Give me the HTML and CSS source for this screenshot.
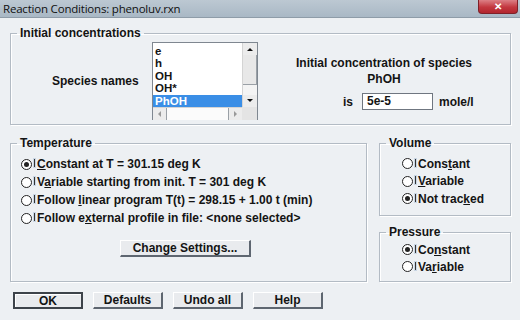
FILE: index.html
```html
<!DOCTYPE html>
<html>
<head>
<meta charset="utf-8">
<link rel="stylesheet" href="styles.css">
</head>
<body>
<div class="window">
  <div class="titlebar">
    <span class="title">Reaction Conditions: phenoluv.rxn</span>
    <span class="close">✕</span>
  </div>
  <div class="dialog">
    <fieldset class="group init">
      <legend>Initial concentrations</legend>
      <div class="init-body">
        <div class="species-label">Species names</div>
        <div class="listbox">
          <div class="items">
            <div class="item">e</div>
            <div class="item">h</div>
            <div class="item">OH</div>
            <div class="item">OH*</div>
            <div class="item sel">PhOH</div>
          </div>
          <div class="vscroll">
            <div class="sbtn up"><span class="tri-up"></span></div>
            <div class="vthumb"></div>
            <div class="sbtn down"><span class="tri-down"></span></div>
          </div>
          <div class="hscroll">
            <div class="sbtn left"><span class="tri-left"></span></div>
            <div class="htrack"></div>
            <div class="sbtn right"><span class="tri-right"></span></div>
          </div>
          <div class="corner"></div>
        </div>
        <div class="conc">
          <div class="conc-title">Initial concentration of species</div>
          <div class="conc-name">PhOH</div>
          <div class="conc-row">
            <span class="is">is</span>
            <span class="input">5e-5</span>
            <span class="unit">mole/l</span>
          </div>
        </div>
      </div>
    </fieldset>

    <div class="middle">
      <fieldset class="group temp">
        <legend>Temperature</legend>
        <div class="radios">
          <div class="radio on"><span class="dot"></span><span class="mk"></span><span class="lbl"><u>C</u>onstant at T = 301.15 deg K</span></div>
          <div class="radio"><span class="dot"></span><span class="mk"></span><span class="lbl">V<u>a</u>riable starting from init. T = 301 deg K</span></div>
          <div class="radio"><span class="dot"></span><span class="mk"></span><span class="lbl">Follow <u>l</u>inear program T(t) = 298.15 + 1.00 t (min)</span></div>
          <div class="radio"><span class="dot"></span><span class="mk"></span><span class="lbl">Follow e<u>x</u>ternal profile in file: &lt;none selected&gt;</span></div>
        </div>
        <div class="settings-row">
          <span class="btn settings">Change Settings...</span>
        </div>
      </fieldset>
      <div class="side">
        <fieldset class="group volume">
          <legend>Volume</legend>
          <div class="radios small">
            <div class="radio"><span class="dot"></span><span class="mk"></span><span class="lbl">Cons<u>t</u>ant</span></div>
            <div class="radio"><span class="dot"></span><span class="mk"></span><span class="lbl"><u>V</u>ariable</span></div>
            <div class="radio on"><span class="dot"></span><span class="mk"></span><span class="lbl">Not trac<u>k</u>ed</span></div>
          </div>
        </fieldset>
        <fieldset class="group pressure">
          <legend>Pressure</legend>
          <div class="radios small tight">
            <div class="radio on"><span class="dot"></span><span class="mk"></span><span class="lbl">Co<u>n</u>stant</span></div>
            <div class="radio"><span class="dot"></span><span class="mk"></span><span class="lbl">Va<u>r</u>iable</span></div>
          </div>
        </fieldset>
      </div>
    </div>

    <div class="buttons">
      <span class="btn default">OK</span>
      <span class="btn">Defaults</span>
      <span class="btn">Undo all</span>
      <span class="btn">Help</span>
    </div>
  </div>
</div>
</body>
</html>
```
FILE: styles.css
```css
html, body {
  margin: 0;
  padding: 0;
}
body {
  width: 520px;
  height: 320px;
  overflow: hidden;
  background: #edf0f3;
  font-family: "Liberation Sans", Arial, sans-serif;
  color: #141414;
}
.window {
  width: 520px;
  height: 320px;
  display: flex;
  flex-direction: column;
}
.titlebar {
  height: 17px;
  flex: none;
  display: flex;
  align-items: flex-start;
  justify-content: space-between;
  background: linear-gradient(#bcc8d2, #a9b8c5);
  border-bottom: 1px solid #8e9ca8;
}
.title {
  font-family: "Open Sans", "Liberation Sans", sans-serif;
  font-size: 11.5px;
  line-height: 17px;
  padding-left: 3px;
  color: #101010;
  letter-spacing: -0.2px;
}
.close {
  width: 40px;
  height: 14px;
  margin-right: 2px;
  background: linear-gradient(#dc7f85, #c3373f 55%, #b2262e);
  border: 1px solid #7e2028;
  border-top: none;
  border-radius: 0 0 4px 4px;
  color: #fff;
  font-size: 10px;
  font-weight: bold;
  line-height: 14px;
  text-align: center;
  box-sizing: border-box;
}
.dialog {
  flex: 1;
  padding: 8px 9px 0 10px;
  display: flex;
  flex-direction: column;
  font-weight: bold;
  font-size: 11.5px;
}
.group {
  margin: 0;
  padding: 0;
  border: 1px solid #b3bbc4;
  box-shadow: inset 1px 1px 0 #fff, 1px 1px 0 #fff;
  min-width: 0;
}
.group legend {
  padding: 0 3px;
  margin-left: 6px;
  line-height: 14px;
  font-size: 12px;
}
.init {
  height: 99px;
  box-sizing: border-box;
}
.init-body {
  display: flex;
  align-items: center;
  padding-top: 2px;
}
.species-label {
  margin-left: 41px;
  width: 100px;
  font-size: 12px;
}
.listbox {
  width: 106px;
  height: 78px;
  box-sizing: border-box;
  border: 1px solid #7f8790;
  background: #fff;
  display: grid;
  grid-template-columns: 1fr 15px;
  grid-template-rows: 1fr 13px;
}
.items {
  padding-top: 2px;
  font-size: 11.5px;
}
.item {
  height: 12.3px;
  line-height: 12px;
  padding-left: 2px;
}
.item.sel {
  background: #3a8ee6;
  color: #fff;
  height: 12px;
  margin-top: 0.5px;
}
.vscroll {
  display: flex;
  flex-direction: column;
  background: #f4f4f4;
  border-left: 1px solid #d4d4d4;
}
.sbtn {
  height: 12px;
  display: flex;
  align-items: center;
  justify-content: center;
  background: #ececec;
}
.vthumb {
  flex: 1;
  margin: 0 0 10px 0;
  background: #e8e8e8;
  border-right: 1px solid #9aa0a6;
  border-bottom: 1px solid #9aa0a6;
}
.hscroll {
  display: flex;
  background: #f4f4f4;
  border-top: 1px solid #d4d4d4;
}
.hscroll .sbtn {
  width: 13px;
  height: auto;
  border-right: 1px solid #9aa0a6;
}
.hscroll .sbtn.right {
  border-right: none;
  border-left: 1px solid #9aa0a6;
}
.htrack {
  flex: 1;
  background: #fbfbfb;
}
.corner {
  background: #e4e4e4;
}
.tri-up, .tri-down, .tri-left, .tri-right {
  width: 0;
  height: 0;
  border: 3px solid transparent;
}
.tri-up { border-bottom: 3px solid #111; border-top: 0; }
.tri-down { border-top: 3px solid #111; border-bottom: 0; }
.tri-left { border-right: 3px solid #999; border-left: 0; }
.tri-right { border-left: 3px solid #999; border-right: 0; }
.conc {
  flex: 1;
  display: flex;
  flex-direction: column;
  align-items: center;
  align-self: flex-start;
  padding-top: 13px;
  font-size: 12px;
}
.conc-title { line-height: 16px; }
.conc-name { line-height: 16px; }
.conc-row {
  align-self: flex-start;
  margin-left: 85px;
  margin-top: 6px;
  display: flex;
  align-items: center;
}
.is { width: 19px; }
.input {
  width: 71px;
  height: 17px;
  box-sizing: border-box;
  border: 1px solid #6f7680;
  background: #fff;
  padding-left: 4px;
  line-height: 15px;
}
.unit { margin-left: 6px; }
.middle {
  margin-top: 11px;
  display: flex;
  gap: 12px;
}
.temp {
  width: 357px;
  height: 146px;
  box-sizing: border-box;
}
.radios {
  padding-top: 5px;
  padding-left: 10px;
}
.radio {
  height: 18px;
  display: flex;
  align-items: center;
  font-size: 12px;
  white-space: nowrap;
}
.lbl {
  white-space: pre;
}
.dot {
  width: 11px;
  height: 11px;
  box-sizing: border-box;
  border: 1.5px solid #222;
  border-radius: 50%;
  background: #fff;
  display: flex;
  align-items: center;
  justify-content: center;
  flex: none;
}
.radio.on .dot::after {
  content: "";
  width: 5px;
  height: 5px;
  border-radius: 50%;
  background: #222;
}
.mk {
  width: 1px;
  height: 8px;
  background: #333;
  margin: 0 2px 2px 2px;
  box-shadow: 0 0 0 1px #c9d6e4;
}
.settings-row {
  margin-top: 13px;
  padding-left: 109px;
  display: flex;
}
.btn {
  display: inline-block;
  box-sizing: border-box;
  height: 17px;
  line-height: 14px;
  text-align: center;
  background: #e9ebee;
  border-top: 1px solid #fff;
  border-left: 1px solid #fff;
  border-right: 2px solid #5e6670;
  border-bottom: 2px solid #5e6670;
  font-size: 12px;
}
.settings {
  width: 131px;
}
.side {
  width: 132px;
  display: flex;
  flex-direction: column;
  gap: 9px;
}
.volume {
  height: 80px;
  box-sizing: border-box;
}
.pressure {
  height: 57px;
  box-sizing: border-box;
}
.radios.small {
  padding-left: 22px;
  padding-top: 5px;
}
.radios.small .radio { height: 17.5px; }
.radios.tight {
  padding-top: 2px;
}
.radios.tight .radio { height: 17px; }
.buttons {
  margin-top: 10px;
  display: flex;
  gap: 10px;
  padding-left: 3px;
}
.buttons .btn {
  width: 70px;
}
.btn.default {
  border: 2px solid #3d434a;
  box-shadow: inset 1px 1px 0 #fff;
}
```
